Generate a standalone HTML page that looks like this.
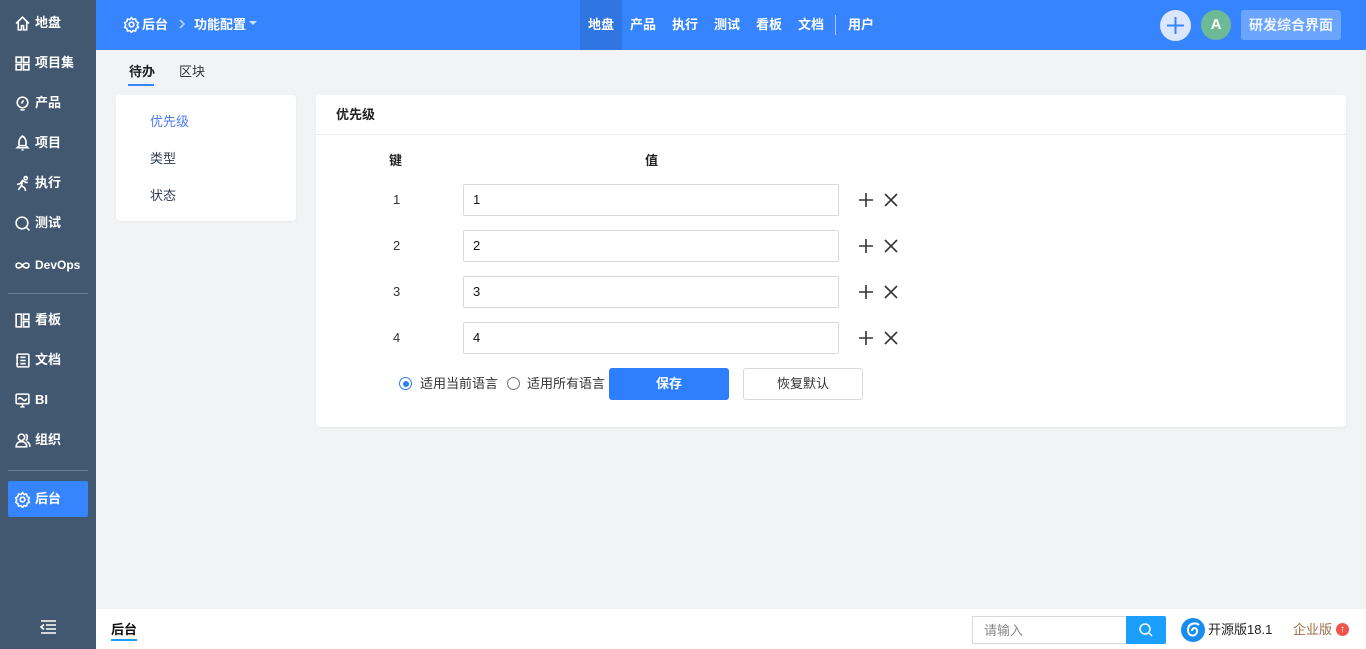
<!DOCTYPE html>
<html><head><meta charset="utf-8"><style>
*{margin:0;padding:0;box-sizing:border-box}
body{width:1366px;height:649px;overflow:hidden;background:#f2f3f5;font-family:"Liberation Sans","Noto Sans CJK SC",sans-serif;font-size:13px;color:#313c52;position:relative}
.side{position:absolute;left:0;top:0;width:96px;height:649px;background:#425870}
.si{position:absolute;left:8px;width:80px;height:36px;color:#fff;font-weight:bold;font-size:13px;display:flex;align-items:center;padding-left:6px;gap:4px;line-height:16px}
.si svg{width:17px;height:17px;fill:none;stroke:#fff;stroke-width:1.5;flex:none}
.hr{position:absolute;left:8px;width:80px;height:1px;background:#6b7d90}
.top{position:absolute;left:96px;top:0;right:0;height:50px;background:#3785fe;color:#fff;font-weight:bold}
.nav{position:absolute;top:0;height:49px;line-height:49px;font-size:13px}
.card{position:absolute;background:#fff;border-radius:4px;box-shadow:0 1px 2px rgba(0,0,0,.05)}
.inp{position:absolute;left:463px;width:376px;height:32px;border:1px solid #d5d9e0;border-radius:2px;background:#fff;padding-left:9px;line-height:30px;color:#111}
.k{position:absolute;left:393px;color:#333}
.ic{position:absolute;left:858px;width:44px;height:16px}
.t{position:absolute;line-height:16px}
</style></head><body>
<div class="side">
<div class="si" style="top:5px"><svg viewBox="0 0 16 16"><path d="M2 8L8 2l6 6M4 6.5V14h3v-4h2v4h3V6.5"/></svg>地盘</div>
<div class="si" style="top:45px"><svg viewBox="0 0 16 16"><rect x="2" y="2" width="5" height="5"/><rect x="9" y="2" width="5" height="5"/><rect x="2" y="9" width="5" height="5"/><rect x="9" y="9" width="5" height="5"/></svg>项目集</div>
<div class="si" style="top:85px"><svg viewBox="0 0 16 16"><circle cx="8" cy="7" r="5"/><path d="M6 14h4M9 5l-2 3"/></svg>产品</div>
<div class="si" style="top:125px"><svg viewBox="0 0 16 16"><path d="M8 1c3 2 4 5 3 9H5C4 6 5 3 8 1zM5 10l-2 2h10l-2-2M7 14h2"/></svg>项目</div>
<div class="si" style="top:165px"><svg viewBox="0 0 16 16"><circle cx="11" cy="3" r="1.5"/><path d="M3 9l3-1 2-3 3 2 2 0M8 5l-1 5-3 4M7 10l3 2 1 3"/></svg>执行</div>
<div class="si" style="top:205px"><svg viewBox="0 0 16 16"><circle cx="7.5" cy="7.5" r="5.5"/><path d="M11.5 11.5l3 3"/></svg>测试</div>
<div class="si" style="top:247px;font-size:12px"><svg viewBox="0 0 16 16"><path d="M8 8c-2-3-6-3-6 0s4 3 6 0 6-3 6 0-4 3-6 0"/></svg>DevOps</div>
<div class="hr" style="top:293px"></div>
<div class="si" style="top:302px"><svg viewBox="0 0 16 16"><rect x="2" y="2" width="5" height="12"/><rect x="9" y="2" width="5" height="5"/><rect x="9" y="9" width="5" height="5"/></svg>看板</div>
<div class="si" style="top:342px"><svg viewBox="0 0 16 16"><rect x="3" y="2" width="11" height="12" rx="1"/><path d="M6 5h5M6 8h5M6 11h5M2 5h2M2 11h2"/></svg>文档</div>
<div class="si" style="top:382px"><svg viewBox="0 0 16 16"><rect x="2" y="2" width="12" height="9" rx="1"/><path d="M4 7c1-2 2-2 4 0s3 1 4-1M6 14h4M8 11v3"/></svg>BI</div>
<div class="si" style="top:422px"><svg viewBox="0 0 16 16"><circle cx="7" cy="5" r="3"/><path d="M2 14c0-3 2-5 5-5s5 2 5 5zM11 2c2 1 2 5 0 6M12 9c2 1 3 3 3 5"/></svg>组织</div>
<div class="hr" style="top:470px"></div>
<div class="si" style="top:481px;background:#3785fe;border-radius:2px"><svg viewBox="0 0 16 16"><circle cx="8" cy="8" r="2.2"/><path d="M8 1.5l1.5 1.8 2.3-.4.6 2.3 2 1.2-1 2.1 1 2.1-2 1.2-.6 2.3-2.3-.4L8 15.5l-1.5-1.8-2.3.4-.6-2.3-2-1.2 1-2.1-1-2.1 2-1.2.6-2.3 2.3.4z"/></svg>后台</div>
<svg style="position:absolute;left:40px;top:620px" width="16" height="14" viewBox="0 0 16 14" fill="none" stroke="#fff" stroke-width="1.6"><path d="M1 1h15M6 5h10M6 9h10M1 13h15M4 4.5L1 7l3 2.5"/></svg>
</div>
<div class="top">
<svg style="position:absolute;left:27px;top:16px" width="17" height="17" viewBox="0 0 16 16" fill="none" stroke="#fff" stroke-width="1.5"><circle cx="8" cy="8" r="2.2"/><path d="M8 1.5l1.5 1.8 2.3-.4.6 2.3 2 1.2-1 2.1 1 2.1-2 1.2-.6 2.3-2.3-.4L8 15.5l-1.5-1.8-2.3.4-.6-2.3-2-1.2 1-2.1-1-2.1 2-1.2.6-2.3 2.3.4z"/></svg>
<div class="nav" style="left:46px">后台</div>
<svg style="position:absolute;left:82px;top:19px" width="8" height="10" viewBox="0 0 8 10" fill="none" stroke="#c5d9ff" stroke-width="1.5"><path d="M2 1l4 4-4 4"/></svg>
<div class="nav" style="left:98px">功能配置</div>
<div style="position:absolute;left:153px;top:21px;border:4px solid transparent;border-top:4px solid #cfe0ff"></div>
<div class="nav" style="left:484px;width:42px;height:50px;background:#2f76e2;text-align:center">地盘</div>
<div class="nav" style="left:534px">产品</div>
<div class="nav" style="left:576px">执行</div>
<div class="nav" style="left:618px">测试</div>
<div class="nav" style="left:660px">看板</div>
<div class="nav" style="left:702px">文档</div>
<div style="position:absolute;left:739px;top:15px;width:1px;height:20px;background:#a9c8ff"></div>
<div class="nav" style="left:752px">用户</div>
<div style="position:absolute;left:1064px;top:10px;width:31px;height:31px;border-radius:50%;background:#dbe7ff"><svg width="31" height="31" viewBox="0 0 31 31" stroke="#3785fe" stroke-width="2"><path d="M15.5 7v17M7 15.5h17"/></svg></div>
<div style="position:absolute;left:1105px;top:10px;width:30px;height:30px;border-radius:50%;background:#6cbb96;text-align:center;line-height:30px;font-size:15px">A</div>
<div style="position:absolute;left:1145px;top:10px;width:100px;height:30px;border-radius:3px;background:#6aa4fd;text-align:center;line-height:30px;font-size:14px;color:#eef4ff">研发综合界面</div>
</div>
<div class="t" style="left:129px;top:64px;font-weight:bold;color:#222">待办</div>
<div style="position:absolute;left:128px;top:84px;width:26px;height:2px;background:#3785fe"></div>
<div class="t" style="left:179px;top:64px;color:#333">区块</div>
<div class="card" style="left:116px;top:95px;width:180px;height:126px">
<div class="t" style="left:34px;top:19px;color:#4e7df4">优先级</div>
<div class="t" style="left:34px;top:56px">类型</div>
<div class="t" style="left:34px;top:93px">状态</div>
</div>
<div class="card" style="left:316px;top:95px;width:1030px;height:332px"></div>
<div class="t" style="left:336px;top:107px;font-weight:bold;color:#222">优先级</div>
<div style="position:absolute;left:316px;top:134px;width:1030px;height:1px;background:#ebedf0"></div>
<div class="t" style="left:389px;top:153px;font-weight:bold;color:#222">键</div>
<div class="t" style="left:645px;top:153px;font-weight:bold;color:#222">值</div>
<div class="k" style="top:192px">1</div><div class="inp" style="top:184px">1</div>
<div class="k" style="top:238px">2</div><div class="inp" style="top:230px">2</div>
<div class="k" style="top:284px">3</div><div class="inp" style="top:276px">3</div>
<div class="k" style="top:330px">4</div><div class="inp" style="top:322px">4</div>
<svg class="ic" style="top:192px" viewBox="0 0 44 16" stroke="#333" stroke-width="1.6" fill="none"><path d="M8 1v14M1 8h14M27 2l12 12M39 2L27 14"/></svg>
<svg class="ic" style="top:238px" viewBox="0 0 44 16" stroke="#333" stroke-width="1.6" fill="none"><path d="M8 1v14M1 8h14M27 2l12 12M39 2L27 14"/></svg>
<svg class="ic" style="top:284px" viewBox="0 0 44 16" stroke="#333" stroke-width="1.6" fill="none"><path d="M8 1v14M1 8h14M27 2l12 12M39 2L27 14"/></svg>
<svg class="ic" style="top:330px" viewBox="0 0 44 16" stroke="#333" stroke-width="1.6" fill="none"><path d="M8 1v14M1 8h14M27 2l12 12M39 2L27 14"/></svg>
<div style="position:absolute;left:399px;top:377px;width:13px;height:13px;border-radius:50%;border:1px solid #2e7ffe"><div style="margin:2.5px;width:6px;height:6px;border-radius:50%;background:#2e7ffe"></div></div>
<div class="t" style="left:420px;top:376px;color:#333">适用当前语言</div>
<div style="position:absolute;left:507px;top:377px;width:13px;height:13px;border-radius:50%;border:1px solid #777"></div>
<div class="t" style="left:527px;top:376px;color:#333">适用所有语言</div>
<div style="position:absolute;left:609px;top:368px;width:120px;height:32px;background:#2e7ffe;border-radius:3px;color:#fff;font-weight:bold;text-align:center;line-height:31px">保存</div>
<div style="position:absolute;left:743px;top:368px;width:120px;height:32px;background:#fff;border:1px solid #d5d9e0;border-radius:3px;color:#333;text-align:center;line-height:30px">恢复默认</div>
<div style="position:absolute;left:96px;top:609px;width:1270px;height:40px;background:#fff"></div>
<div class="t" style="left:111px;top:622px;font-weight:bold;color:#111">后台</div>
<div style="position:absolute;left:111px;top:639px;width:26px;height:2px;background:#1a9ffe"></div>
<div style="position:absolute;left:972px;top:616px;width:156px;height:28px;border:1px solid #d5d9e0;padding-left:11px;line-height:27px;color:#888">请输入</div>
<div style="position:absolute;left:1126px;top:616px;width:40px;height:28px;background:#1a9ffe;border-radius:0 2px 2px 0"><svg width="40" height="28" viewBox="0 0 40 28" fill="none" stroke="#fff" stroke-width="1.5"><circle cx="19" cy="13" r="5"/><path d="M23 17l3 3"/></svg></div>
<div style="position:absolute;left:1181px;top:618px;width:24px;height:24px;border-radius:50%;background:#1a8cf0"><svg width="24" height="24" viewBox="0 0 24 24" fill="none" stroke="#fff" stroke-width="2"><path d="M18 7c-3-3-11-2-11 5s8 7 9 2-5-5-5-1"/></svg></div>
<div class="t" style="left:1208px;top:622px;color:#222">开源版18.1</div>
<div class="t" style="left:1293px;top:622px;color:#9b6e45">企业版</div>
<div style="position:absolute;left:1336px;top:623px;width:13px;height:13px;border-radius:50%;background:#f0544b;color:#fff;font-size:10px;text-align:center;line-height:13px;font-weight:bold">↑</div>
</body></html>
